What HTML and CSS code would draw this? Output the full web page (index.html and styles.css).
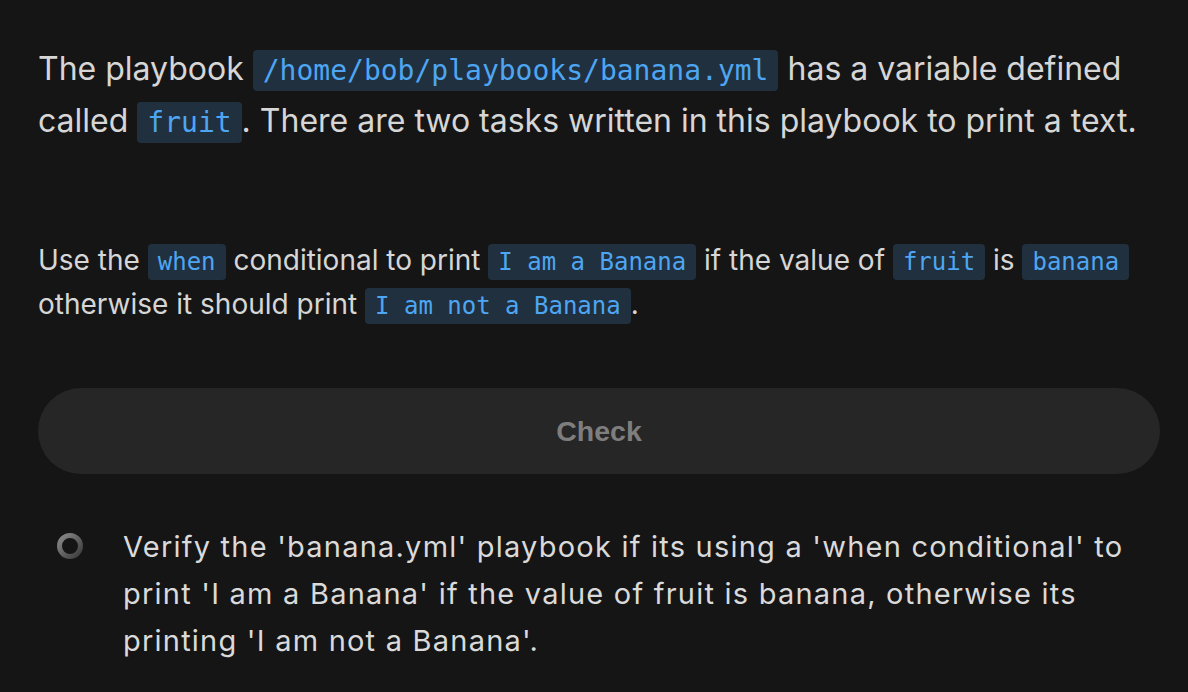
FILE: index.html
```html
<!DOCTYPE html>
<html>
<head>
<meta charset="utf-8">
<link rel="stylesheet" href="styles.css">
</head>
<body>
<main class="page">
  <p class="intro">The playbook <code>/home/bob/playbooks/banana.yml</code> has a variable defined called <code>fruit</code>. There are two tasks written in this playbook to print a text.</p>
  <p class="task">Use the <code>when</code> conditional to print <code>I am a Banana</code> if the value of <code>fruit</code> is <code>banana</code> otherwise it should print <code>I am not a Banana</code>.</p>
  <button class="check">Check</button>
  <div class="verify">
    <svg class="status" width="30" height="30" viewBox="0 0 30 30">
      <defs>
        <linearGradient id="g" x1="0" y1="0" x2="1" y2="1">
          <stop offset="0" stop-color="#8a8a8a"/>
          <stop offset="1" stop-color="#3c3c3c"/>
        </linearGradient>
      </defs>
      <circle cx="15" cy="15" r="10.5" fill="none" stroke="url(#g)" stroke-width="5"/>
    </svg>
    <p class="verify-text">Verify the 'banana.yml' playbook if its using a 'when conditional' to print 'I am a Banana' if the value of fruit is banana, otherwise its printing 'I am not a Banana'.</p>
  </div>
</main>
</body>
</html>
```
FILE: styles.css
```css
html, body {
  margin: 0;
  padding: 0;
  background: #151515;
}
body {
  font-family: Inter, "Noto Sans", sans-serif;
  color: #d6d6d6;
}
.page {
  padding: 44px 28px 0 38px;
  display: flex;
  flex-direction: column;
}
p { margin: 0; }
code {
  font-family: "DejaVu Sans Mono", "Liberation Mono", monospace;
  background: #20303f;
  color: #4ea6f2;
  border-radius: 4px;
  padding: 4px 10px;
  letter-spacing: 0;
}
.intro {
  font-size: 32px;
  line-height: 49.5px;
}
.intro code { font-size: 28px; }
.task {
  margin-top: 92px;
  font-size: 28px;
  line-height: 42px;
}
.task code { font-size: 24px; padding: 4px 10px; }
.check {
  margin-top: 61px;
  height: 86px;
  width: 100%;
  border: none;
  border-radius: 43px;
  background: #262626;
  color: #7e7e7e;
  font-family: "Liberation Sans", Arial, sans-serif;
  font-weight: bold;
  font-size: 28.5px;
}
.verify {
  margin-top: 49px;
  display: flex;
  align-items: flex-start;
  padding-left: 17px;
  gap: 38px;
}
.status {
  margin-top: 8px;
  flex: none;
}
.verify-text {
  font-size: 29px;
  letter-spacing: 1.22px;
  line-height: 47px;
  padding-right: 20px;
  color: #dadada;
}
```
